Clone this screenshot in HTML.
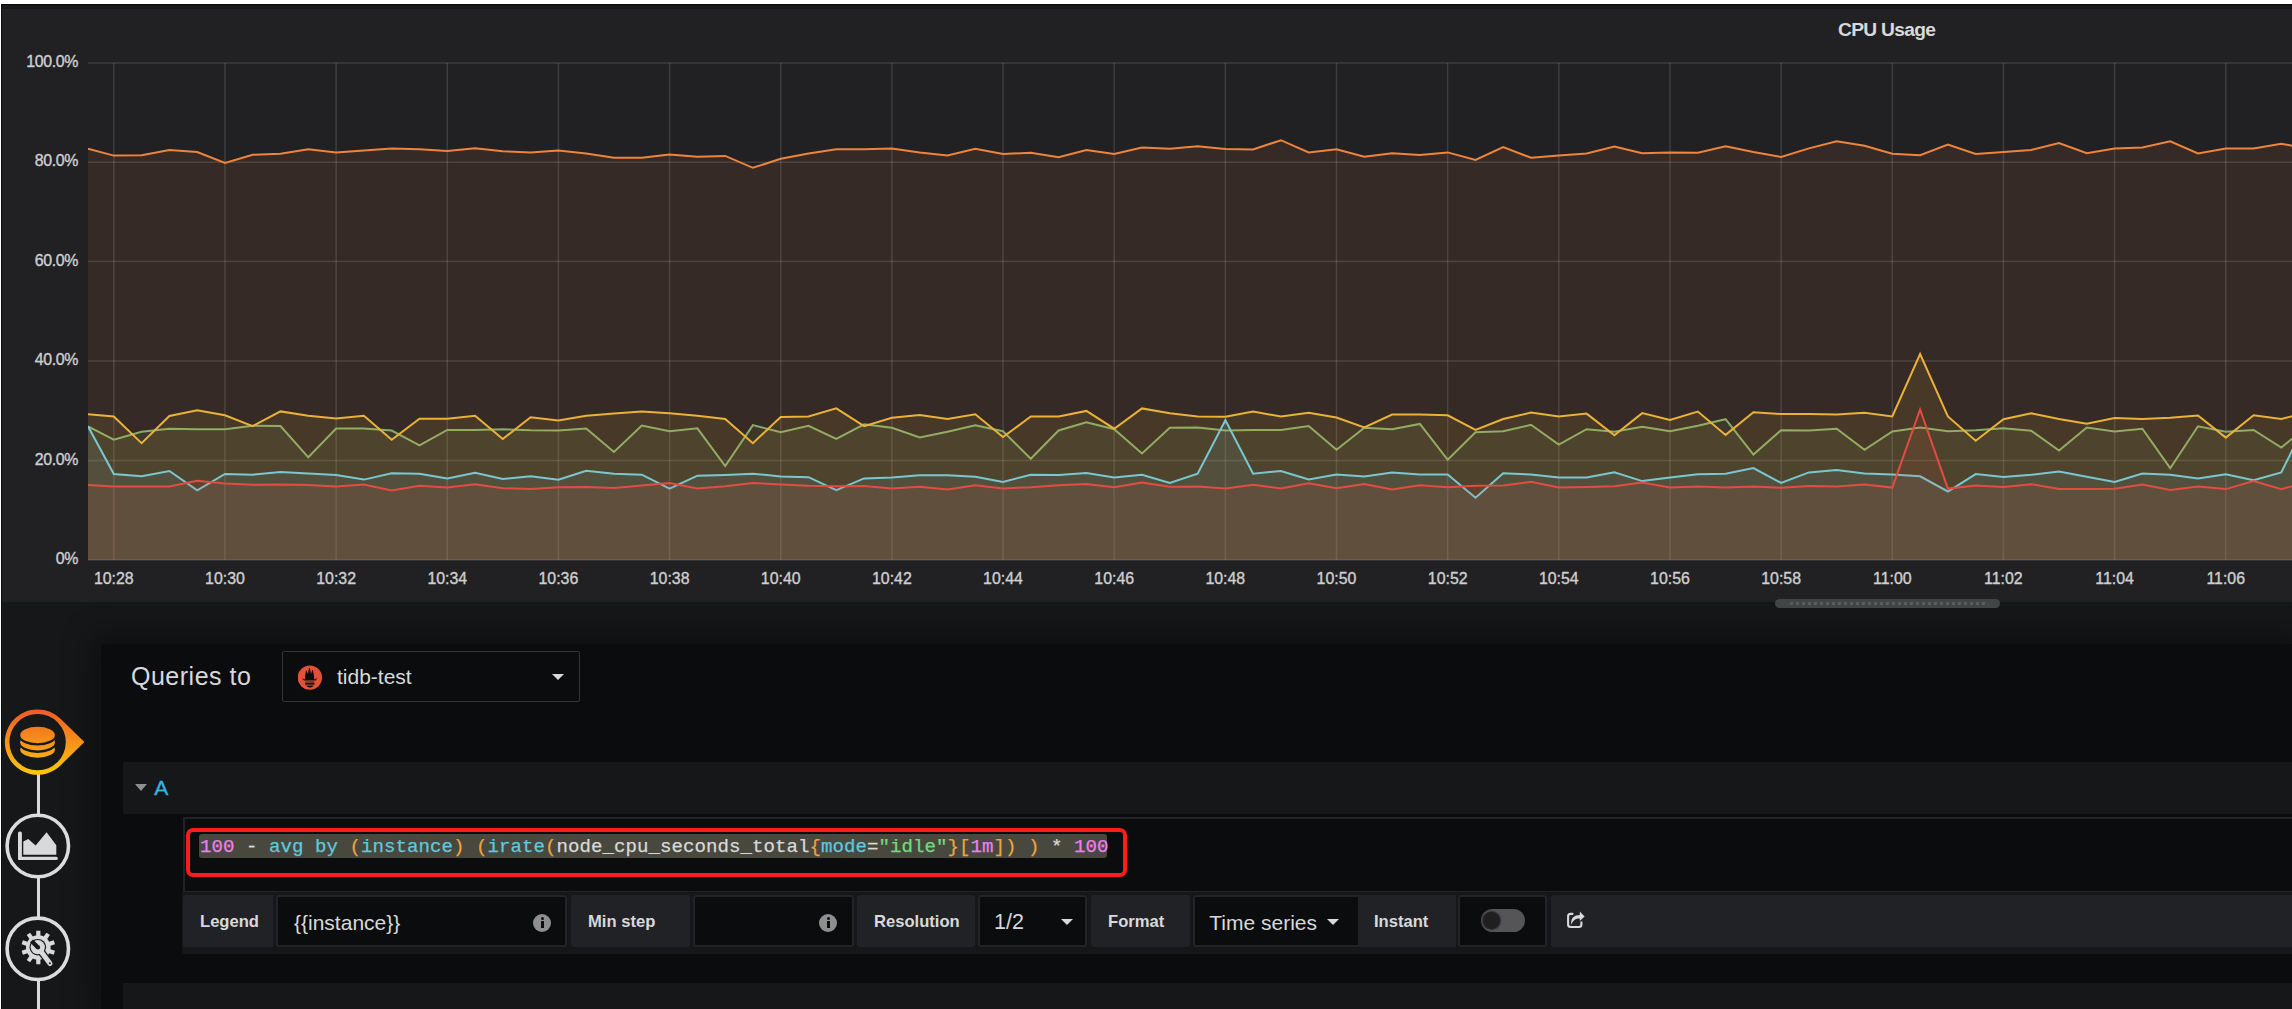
<!DOCTYPE html>
<html><head><meta charset="utf-8">
<style>
html,body{margin:0;padding:0}
body{width:2292px;height:1009px;position:relative;overflow:hidden;background:#ffffff;font-family:"Liberation Sans",sans-serif}
.abs{position:absolute}
.ax{font-family:"Liberation Sans",sans-serif;font-size:15.9px;fill:#cfcfcf;stroke:#cfcfcf;stroke-width:0.35px}
#panel{left:1px;top:4px;width:2291px;height:598px;background:#212124}
#panel .bt{position:absolute;left:0;top:0;width:100%;height:1px;background:#060708}
#panel .bl{position:absolute;left:0;top:0;width:1px;height:100%;background:#0b0c0e}
#panel .sh{position:absolute;left:1px;top:1px;right:0;height:4px;background:linear-gradient(#19191b,#161617)}
#title{left:1838px;top:19px;font-size:19.2px;font-weight:bold;color:#d8d9da;white-space:nowrap;letter-spacing:-0.68px}
#below{left:1px;top:602px;width:2291px;height:407px;background:#161719}
#below .bl{position:absolute;left:0;top:0;width:1px;height:100%;background:#0b0c0e}
#editor{left:101px;top:644px;width:2191px;height:365px;background:#0b0c0e;border-radius:3px 0 0 0;box-shadow:0 0 30px 10px rgba(0,0,0,0.35)}
#scroll{left:1775px;top:599px;width:225px;height:9px;border-radius:5px;background:#434446}
#scroll .dots{position:absolute;left:15px;top:3px;width:195px;height:3px;background:repeating-linear-gradient(90deg,#5a5b5d 0 3px,transparent 3px 6px)}
.qt{left:131px;top:662px;font-size:25px;color:#d8d9da;white-space:nowrap;letter-spacing:0.5px}
#ds{left:282px;top:651px;width:296px;height:49px;border:1px solid #333438;border-radius:2px;background:#0b0c0e}
#ds .name{position:absolute;left:54px;top:13px;font-size:21px;color:#d8d9da;white-space:nowrap}
#rowA{left:123px;top:762px;width:2169px;height:52px;background:#161719}
#rowA .tri{position:absolute;left:12px;top:22px;width:0;height:0;border-left:6.5px solid transparent;border-right:6.5px solid transparent;border-top:7px solid #8e8e8e}
#rowA .A{position:absolute;left:31.3px;top:13.7px;font-size:21px;color:#33b5e5;-webkit-text-stroke:0.35px #33b5e5}
#qfield{left:183px;top:817px;width:2109px;height:72px;border:2px solid #222326;border-right:0;background:#0b0c0e}
#redbox{left:186px;top:828.3px;width:933px;height:41px;border:4.5px solid #fb1c1c;border-radius:7px}
#sel{left:199px;top:834px;width:908px;height:24px;border-radius:3px;background:#48483f}
#code{left:200px;top:835px;font-family:"Liberation Mono",monospace;font-size:19.1px;letter-spacing:0.04px;-webkit-text-stroke:0.25px currentColor;line-height:24px;white-space:pre;color:#d8d9da}
.n{color:#ee7ff0}.f{color:#5fc9df}.p{color:#eda33e}.s{color:#6ede7c}
#opts{left:182px;top:892px;width:2110px;height:62px;background:#161719}
.lbl{position:absolute;top:3px;height:52px;background:#212226;color:#d8d9da;font-size:16.6px;font-weight:bold;line-height:53.5px;box-sizing:border-box;border-radius:3px}
.inp{position:absolute;top:3px;height:52px;background:#0b0c0e;border:2px solid #222326;box-sizing:border-box;color:#d8d9da;font-size:21px;line-height:51px;border-radius:3px}
.info{position:absolute;width:18px;height:18px;border-radius:50%;background:#8e8e8e}
.info:after{content:"";position:absolute;left:7.5px;top:7px;width:3px;height:7px;background:#0b0c0e}
.info:before{content:"";position:absolute;left:7.5px;top:3px;width:3px;height:3px;background:#0b0c0e;border-radius:50%}
.caret{position:absolute;width:0;height:0;border-left:6px solid transparent;border-right:6px solid transparent;border-top:6px solid #d8d9da}
</style></head>
<body>
<div id="panel" class="abs"><div class="bt"></div><div class="bl"></div><div class="sh"></div></div>
<div id="title" class="abs">CPU Usage</div>
<div id="below" class="abs"><div class="bl"></div></div>
<div id="editor" class="abs"></div>
<svg width="2292" height="1009" style="position:absolute;left:0;top:0">
<defs><clipPath id="cp"><rect x="88" y="0" width="2204" height="561"/></clipPath></defs>
<g stroke="rgba(200,200,200,0.17)" stroke-width="1.5"><line x1="88" y1="63" x2="2292" y2="63"/><line x1="88" y1="162.2" x2="2292" y2="162.2"/><line x1="88" y1="261.6" x2="2292" y2="261.6"/><line x1="88" y1="361" x2="2292" y2="361"/><line x1="88" y1="460.5" x2="2292" y2="460.5"/><line x1="88" y1="560" x2="2292" y2="560"/><line x1="113.80" y1="63" x2="113.80" y2="560"/><line x1="224.95" y1="63" x2="224.95" y2="560"/><line x1="336.11" y1="63" x2="336.11" y2="560"/><line x1="447.27" y1="63" x2="447.27" y2="560"/><line x1="558.42" y1="63" x2="558.42" y2="560"/><line x1="669.57" y1="63" x2="669.57" y2="560"/><line x1="780.73" y1="63" x2="780.73" y2="560"/><line x1="891.88" y1="63" x2="891.88" y2="560"/><line x1="1003.04" y1="63" x2="1003.04" y2="560"/><line x1="1114.19" y1="63" x2="1114.19" y2="560"/><line x1="1225.35" y1="63" x2="1225.35" y2="560"/><line x1="1336.50" y1="63" x2="1336.50" y2="560"/><line x1="1447.66" y1="63" x2="1447.66" y2="560"/><line x1="1558.82" y1="63" x2="1558.82" y2="560"/><line x1="1669.97" y1="63" x2="1669.97" y2="560"/><line x1="1781.12" y1="63" x2="1781.12" y2="560"/><line x1="1892.28" y1="63" x2="1892.28" y2="560"/><line x1="2003.43" y1="63" x2="2003.43" y2="560"/><line x1="2114.59" y1="63" x2="2114.59" y2="560"/><line x1="2225.75" y1="63" x2="2225.75" y2="560"/></g>
<g clip-path="url(#cp)">
<polygon points="88,560 88.0,426.3 113.8,439.7 141.6,431.7 169.4,428.7 197.2,429.2 225.0,429.2 252.7,425.8 280.5,426.1 308.3,457.3 336.1,428.5 363.9,428.5 391.7,430.5 419.5,445.4 447.3,430.0 475.1,430.0 502.8,429.2 530.6,430.2 558.4,430.5 586.2,428.5 614.0,452.0 641.8,425.6 669.6,431.2 697.4,428.3 725.2,466.1 752.9,425.1 780.7,432.2 808.5,425.8 836.3,438.8 864.1,424.3 891.9,427.8 919.7,437.5 947.5,431.7 975.3,425.3 1003.0,431.2 1030.8,458.8 1058.6,430.5 1086.4,422.4 1114.2,429.2 1142.0,453.4 1169.8,427.8 1197.6,427.5 1225.4,430.5 1253.1,430.0 1280.9,430.0 1308.7,426.1 1336.5,449.8 1364.3,427.8 1392.1,429.2 1419.9,423.9 1447.7,459.8 1475.5,432.2 1503.2,431.2 1531.0,424.8 1558.8,444.6 1586.6,429.2 1614.4,431.7 1642.2,426.8 1670.0,431.2 1697.8,425.8 1725.6,419.2 1753.4,454.5 1781.1,430.2 1808.9,430.5 1836.7,428.7 1864.5,449.8 1892.3,431.4 1920.1,427.5 1947.9,431.2 1975.7,430.2 2003.5,428.3 2031.2,430.7 2059.0,450.6 2086.8,427.5 2114.6,431.4 2142.4,428.7 2170.2,468.2 2198.0,426.3 2225.8,431.7 2253.6,430.0 2281.3,447.6 2309.1,424.6 2309.1,560" fill="#7EB26D" fill-opacity="0.1"/>
<polyline points="88.0,426.3 113.8,439.7 141.6,431.7 169.4,428.7 197.2,429.2 225.0,429.2 252.7,425.8 280.5,426.1 308.3,457.3 336.1,428.5 363.9,428.5 391.7,430.5 419.5,445.4 447.3,430.0 475.1,430.0 502.8,429.2 530.6,430.2 558.4,430.5 586.2,428.5 614.0,452.0 641.8,425.6 669.6,431.2 697.4,428.3 725.2,466.1 752.9,425.1 780.7,432.2 808.5,425.8 836.3,438.8 864.1,424.3 891.9,427.8 919.7,437.5 947.5,431.7 975.3,425.3 1003.0,431.2 1030.8,458.8 1058.6,430.5 1086.4,422.4 1114.2,429.2 1142.0,453.4 1169.8,427.8 1197.6,427.5 1225.4,430.5 1253.1,430.0 1280.9,430.0 1308.7,426.1 1336.5,449.8 1364.3,427.8 1392.1,429.2 1419.9,423.9 1447.7,459.8 1475.5,432.2 1503.2,431.2 1531.0,424.8 1558.8,444.6 1586.6,429.2 1614.4,431.7 1642.2,426.8 1670.0,431.2 1697.8,425.8 1725.6,419.2 1753.4,454.5 1781.1,430.2 1808.9,430.5 1836.7,428.7 1864.5,449.8 1892.3,431.4 1920.1,427.5 1947.9,431.2 1975.7,430.2 2003.5,428.3 2031.2,430.7 2059.0,450.6 2086.8,427.5 2114.6,431.4 2142.4,428.7 2170.2,468.2 2198.0,426.3 2225.8,431.7 2253.6,430.0 2281.3,447.6 2309.1,424.6" fill="none" stroke="#7EB26D" stroke-width="2" stroke-linejoin="miter"/>
<polygon points="88,560 88.0,414.3 113.8,416.5 141.6,443.2 169.4,416.0 197.2,410.2 225.0,415.3 252.7,426.1 280.5,411.4 308.3,415.8 336.1,418.5 363.9,415.8 391.7,439.7 419.5,418.7 447.3,418.7 475.1,415.8 502.8,439.0 530.6,417.2 558.4,420.4 586.2,415.8 614.0,413.6 641.8,411.4 669.6,413.3 697.4,415.8 725.2,419.0 752.9,443.2 780.7,417.0 808.5,416.5 836.3,408.4 864.1,426.1 891.9,417.7 919.7,415.0 947.5,419.0 975.3,414.3 1003.0,437.1 1030.8,416.5 1058.6,416.5 1086.4,410.9 1114.2,428.7 1142.0,408.4 1169.8,413.3 1197.6,416.5 1225.4,416.8 1253.1,411.6 1280.9,416.5 1308.7,412.8 1336.5,417.5 1364.3,427.5 1392.1,414.6 1419.9,414.6 1447.7,415.3 1475.5,430.0 1503.2,419.0 1531.0,412.6 1558.8,416.5 1586.6,413.6 1614.4,435.3 1642.2,413.1 1670.0,419.9 1697.8,411.6 1725.6,434.9 1753.4,412.3 1781.1,414.0 1808.9,414.0 1836.7,414.5 1864.5,412.8 1892.3,416.5 1920.1,354.0 1947.9,416.5 1975.7,440.8 2003.5,419.2 2031.2,413.3 2059.0,418.9 2086.8,423.8 2114.6,418.0 2142.4,418.9 2170.2,417.7 2198.0,415.5 2225.8,437.6 2253.6,415.3 2281.3,418.9 2309.1,411.8 2309.1,560" fill="#EAB839" fill-opacity="0.1"/>
<polyline points="88.0,414.3 113.8,416.5 141.6,443.2 169.4,416.0 197.2,410.2 225.0,415.3 252.7,426.1 280.5,411.4 308.3,415.8 336.1,418.5 363.9,415.8 391.7,439.7 419.5,418.7 447.3,418.7 475.1,415.8 502.8,439.0 530.6,417.2 558.4,420.4 586.2,415.8 614.0,413.6 641.8,411.4 669.6,413.3 697.4,415.8 725.2,419.0 752.9,443.2 780.7,417.0 808.5,416.5 836.3,408.4 864.1,426.1 891.9,417.7 919.7,415.0 947.5,419.0 975.3,414.3 1003.0,437.1 1030.8,416.5 1058.6,416.5 1086.4,410.9 1114.2,428.7 1142.0,408.4 1169.8,413.3 1197.6,416.5 1225.4,416.8 1253.1,411.6 1280.9,416.5 1308.7,412.8 1336.5,417.5 1364.3,427.5 1392.1,414.6 1419.9,414.6 1447.7,415.3 1475.5,430.0 1503.2,419.0 1531.0,412.6 1558.8,416.5 1586.6,413.6 1614.4,435.3 1642.2,413.1 1670.0,419.9 1697.8,411.6 1725.6,434.9 1753.4,412.3 1781.1,414.0 1808.9,414.0 1836.7,414.5 1864.5,412.8 1892.3,416.5 1920.1,354.0 1947.9,416.5 1975.7,440.8 2003.5,419.2 2031.2,413.3 2059.0,418.9 2086.8,423.8 2114.6,418.0 2142.4,418.9 2170.2,417.7 2198.0,415.5 2225.8,437.6 2253.6,415.3 2281.3,418.9 2309.1,411.8" fill="none" stroke="#EAB839" stroke-width="2" stroke-linejoin="miter"/>
<polygon points="88,560 88.0,426.3 113.8,474.0 141.6,476.2 169.4,471.0 197.2,490.4 225.0,474.0 252.7,474.7 280.5,472.0 308.3,473.5 336.1,475.0 363.9,479.6 391.7,473.2 419.5,473.7 447.3,478.4 475.1,472.8 502.8,478.9 530.6,476.2 558.4,479.8 586.2,470.8 614.0,473.7 641.8,474.7 669.6,488.6 697.4,475.7 725.2,475.0 752.9,473.7 780.7,476.4 808.5,477.2 836.3,490.1 864.1,478.4 891.9,477.4 919.7,475.2 947.5,475.2 975.3,476.7 1003.0,482.0 1030.8,474.7 1058.6,475.0 1086.4,473.0 1114.2,477.4 1142.0,474.7 1169.8,483.0 1197.6,473.7 1225.4,420.2 1253.1,473.7 1280.9,471.0 1308.7,479.4 1336.5,474.5 1364.3,476.4 1392.1,472.5 1419.9,474.5 1447.7,474.5 1475.5,497.7 1503.2,473.2 1531.0,474.5 1558.8,477.6 1586.6,477.4 1614.4,472.3 1642.2,481.1 1670.0,477.4 1697.8,474.2 1725.6,473.7 1753.4,468.0 1781.1,482.9 1808.9,472.4 1836.7,469.9 1864.5,473.6 1892.3,474.6 1920.1,476.3 1947.9,491.5 1975.7,474.1 2003.5,477.0 2031.2,474.8 2059.0,471.6 2086.8,476.8 2114.6,481.9 2142.4,473.6 2170.2,474.8 2198.0,478.5 2225.8,474.3 2253.6,480.2 2281.3,472.4 2309.1,416.2 2309.1,560" fill="#6ED0E0" fill-opacity="0.1"/>
<polyline points="88.0,426.3 113.8,474.0 141.6,476.2 169.4,471.0 197.2,490.4 225.0,474.0 252.7,474.7 280.5,472.0 308.3,473.5 336.1,475.0 363.9,479.6 391.7,473.2 419.5,473.7 447.3,478.4 475.1,472.8 502.8,478.9 530.6,476.2 558.4,479.8 586.2,470.8 614.0,473.7 641.8,474.7 669.6,488.6 697.4,475.7 725.2,475.0 752.9,473.7 780.7,476.4 808.5,477.2 836.3,490.1 864.1,478.4 891.9,477.4 919.7,475.2 947.5,475.2 975.3,476.7 1003.0,482.0 1030.8,474.7 1058.6,475.0 1086.4,473.0 1114.2,477.4 1142.0,474.7 1169.8,483.0 1197.6,473.7 1225.4,420.2 1253.1,473.7 1280.9,471.0 1308.7,479.4 1336.5,474.5 1364.3,476.4 1392.1,472.5 1419.9,474.5 1447.7,474.5 1475.5,497.7 1503.2,473.2 1531.0,474.5 1558.8,477.6 1586.6,477.4 1614.4,472.3 1642.2,481.1 1670.0,477.4 1697.8,474.2 1725.6,473.7 1753.4,468.0 1781.1,482.9 1808.9,472.4 1836.7,469.9 1864.5,473.6 1892.3,474.6 1920.1,476.3 1947.9,491.5 1975.7,474.1 2003.5,477.0 2031.2,474.8 2059.0,471.6 2086.8,476.8 2114.6,481.9 2142.4,473.6 2170.2,474.8 2198.0,478.5 2225.8,474.3 2253.6,480.2 2281.3,472.4 2309.1,416.2" fill="none" stroke="#6ED0E0" stroke-width="2" stroke-linejoin="miter"/>
<polygon points="88,560 88.0,148.8 113.8,155.6 141.6,155.2 169.4,150.0 197.2,152.0 225.0,163.0 252.7,154.7 280.5,153.7 308.3,149.3 336.1,152.5 363.9,150.5 391.7,148.5 419.5,149.3 447.3,151.0 475.1,148.3 502.8,151.2 530.6,152.5 558.4,150.5 586.2,153.4 614.0,157.8 641.8,157.8 669.6,154.4 697.4,156.8 725.2,155.9 752.9,167.8 780.7,158.8 808.5,153.4 836.3,149.3 864.1,149.3 891.9,148.5 919.7,152.4 947.5,155.4 975.3,148.8 1003.0,154.1 1030.8,152.7 1058.6,157.3 1086.4,150.0 1114.2,153.9 1142.0,147.6 1169.8,148.8 1197.6,146.3 1225.4,149.0 1253.1,149.5 1280.9,140.2 1308.7,152.4 1336.5,149.3 1364.3,156.8 1392.1,153.2 1419.9,155.1 1447.7,152.4 1475.5,160.0 1503.2,147.0 1531.0,157.8 1558.8,155.4 1586.6,153.4 1614.4,146.6 1642.2,153.2 1670.0,152.4 1697.8,152.7 1725.6,146.3 1753.4,152.0 1781.1,157.0 1808.9,148.4 1836.7,141.3 1864.5,145.7 1892.3,153.8 1920.1,155.2 1947.9,144.5 1975.7,154.0 2003.5,152.0 2031.2,149.9 2059.0,143.0 2086.8,153.3 2114.6,148.4 2142.4,147.4 2170.2,141.3 2198.0,153.5 2225.8,148.4 2253.6,148.4 2281.3,143.7 2309.1,149.0 2309.1,560" fill="#EF843C" fill-opacity="0.1"/>
<polyline points="88.0,148.8 113.8,155.6 141.6,155.2 169.4,150.0 197.2,152.0 225.0,163.0 252.7,154.7 280.5,153.7 308.3,149.3 336.1,152.5 363.9,150.5 391.7,148.5 419.5,149.3 447.3,151.0 475.1,148.3 502.8,151.2 530.6,152.5 558.4,150.5 586.2,153.4 614.0,157.8 641.8,157.8 669.6,154.4 697.4,156.8 725.2,155.9 752.9,167.8 780.7,158.8 808.5,153.4 836.3,149.3 864.1,149.3 891.9,148.5 919.7,152.4 947.5,155.4 975.3,148.8 1003.0,154.1 1030.8,152.7 1058.6,157.3 1086.4,150.0 1114.2,153.9 1142.0,147.6 1169.8,148.8 1197.6,146.3 1225.4,149.0 1253.1,149.5 1280.9,140.2 1308.7,152.4 1336.5,149.3 1364.3,156.8 1392.1,153.2 1419.9,155.1 1447.7,152.4 1475.5,160.0 1503.2,147.0 1531.0,157.8 1558.8,155.4 1586.6,153.4 1614.4,146.6 1642.2,153.2 1670.0,152.4 1697.8,152.7 1725.6,146.3 1753.4,152.0 1781.1,157.0 1808.9,148.4 1836.7,141.3 1864.5,145.7 1892.3,153.8 1920.1,155.2 1947.9,144.5 1975.7,154.0 2003.5,152.0 2031.2,149.9 2059.0,143.0 2086.8,153.3 2114.6,148.4 2142.4,147.4 2170.2,141.3 2198.0,153.5 2225.8,148.4 2253.6,148.4 2281.3,143.7 2309.1,149.0" fill="none" stroke="#EF843C" stroke-width="2" stroke-linejoin="miter"/>
<polygon points="88,560 88.0,485.0 113.8,486.4 141.6,486.4 169.4,486.4 197.2,480.8 225.0,483.5 252.7,484.7 280.5,484.5 308.3,485.0 336.1,486.4 363.9,484.5 391.7,490.4 419.5,485.7 447.3,487.4 475.1,484.2 502.8,488.2 530.6,488.9 558.4,487.2 586.2,486.9 614.0,487.9 641.8,485.5 669.6,483.0 697.4,488.4 725.2,486.2 752.9,483.0 780.7,484.5 808.5,485.7 836.3,486.2 864.1,486.0 891.9,488.6 919.7,486.7 947.5,489.4 975.3,485.2 1003.0,488.4 1030.8,487.2 1058.6,485.2 1086.4,484.0 1114.2,487.2 1142.0,482.5 1169.8,486.7 1197.6,486.4 1225.4,488.6 1253.1,484.7 1280.9,488.4 1308.7,483.3 1336.5,488.2 1364.3,484.0 1392.1,489.4 1419.9,485.2 1447.7,487.2 1475.5,485.7 1503.2,485.5 1531.0,481.8 1558.8,487.4 1586.6,486.9 1614.4,486.2 1642.2,482.5 1670.0,487.4 1697.8,486.4 1725.6,487.4 1753.4,486.6 1781.1,487.8 1808.9,486.1 1836.7,486.6 1864.5,484.6 1892.3,487.6 1920.1,409.4 1947.9,488.6 1975.7,485.6 2003.5,487.1 2031.2,484.2 2059.0,489.1 2086.8,489.1 2114.6,488.8 2142.4,484.4 2170.2,490.0 2198.0,486.4 2225.8,489.1 2253.6,481.0 2281.3,489.1 2309.1,481.5 2309.1,560" fill="#E24D42" fill-opacity="0.1"/>
<polyline points="88.0,485.0 113.8,486.4 141.6,486.4 169.4,486.4 197.2,480.8 225.0,483.5 252.7,484.7 280.5,484.5 308.3,485.0 336.1,486.4 363.9,484.5 391.7,490.4 419.5,485.7 447.3,487.4 475.1,484.2 502.8,488.2 530.6,488.9 558.4,487.2 586.2,486.9 614.0,487.9 641.8,485.5 669.6,483.0 697.4,488.4 725.2,486.2 752.9,483.0 780.7,484.5 808.5,485.7 836.3,486.2 864.1,486.0 891.9,488.6 919.7,486.7 947.5,489.4 975.3,485.2 1003.0,488.4 1030.8,487.2 1058.6,485.2 1086.4,484.0 1114.2,487.2 1142.0,482.5 1169.8,486.7 1197.6,486.4 1225.4,488.6 1253.1,484.7 1280.9,488.4 1308.7,483.3 1336.5,488.2 1364.3,484.0 1392.1,489.4 1419.9,485.2 1447.7,487.2 1475.5,485.7 1503.2,485.5 1531.0,481.8 1558.8,487.4 1586.6,486.9 1614.4,486.2 1642.2,482.5 1670.0,487.4 1697.8,486.4 1725.6,487.4 1753.4,486.6 1781.1,487.8 1808.9,486.1 1836.7,486.6 1864.5,484.6 1892.3,487.6 1920.1,409.4 1947.9,488.6 1975.7,485.6 2003.5,487.1 2031.2,484.2 2059.0,489.1 2086.8,489.1 2114.6,488.8 2142.4,484.4 2170.2,490.0 2198.0,486.4 2225.8,489.1 2253.6,481.0 2281.3,489.1 2309.1,481.5" fill="none" stroke="#E24D42" stroke-width="2" stroke-linejoin="miter"/>
</g>
<text x="78" y="67.1" text-anchor="end" class="ax" letter-spacing="-0.35">100.0%</text>
<text x="78" y="166.3" text-anchor="end" class="ax" letter-spacing="-0.35">80.0%</text>
<text x="78" y="265.7" text-anchor="end" class="ax" letter-spacing="-0.35">60.0%</text>
<text x="78" y="365.1" text-anchor="end" class="ax" letter-spacing="-0.35">40.0%</text>
<text x="78" y="464.6" text-anchor="end" class="ax" letter-spacing="-0.35">20.0%</text>
<text x="78" y="564.1" text-anchor="end" class="ax" letter-spacing="-0.35">0%</text>
<text x="113.8" y="583.8" text-anchor="middle" class="ax">10:28</text>
<text x="225.0" y="583.8" text-anchor="middle" class="ax">10:30</text>
<text x="336.1" y="583.8" text-anchor="middle" class="ax">10:32</text>
<text x="447.3" y="583.8" text-anchor="middle" class="ax">10:34</text>
<text x="558.4" y="583.8" text-anchor="middle" class="ax">10:36</text>
<text x="669.6" y="583.8" text-anchor="middle" class="ax">10:38</text>
<text x="780.7" y="583.8" text-anchor="middle" class="ax">10:40</text>
<text x="891.9" y="583.8" text-anchor="middle" class="ax">10:42</text>
<text x="1003.0" y="583.8" text-anchor="middle" class="ax">10:44</text>
<text x="1114.2" y="583.8" text-anchor="middle" class="ax">10:46</text>
<text x="1225.3" y="583.8" text-anchor="middle" class="ax">10:48</text>
<text x="1336.5" y="583.8" text-anchor="middle" class="ax">10:50</text>
<text x="1447.7" y="583.8" text-anchor="middle" class="ax">10:52</text>
<text x="1558.8" y="583.8" text-anchor="middle" class="ax">10:54</text>
<text x="1670.0" y="583.8" text-anchor="middle" class="ax">10:56</text>
<text x="1781.1" y="583.8" text-anchor="middle" class="ax">10:58</text>
<text x="1892.3" y="583.8" text-anchor="middle" class="ax">11:00</text>
<text x="2003.4" y="583.8" text-anchor="middle" class="ax">11:02</text>
<text x="2114.6" y="583.8" text-anchor="middle" class="ax">11:04</text>
<text x="2225.7" y="583.8" text-anchor="middle" class="ax">11:06</text>
</svg>
<div id="scroll" class="abs"><div class="dots"></div></div>

<!-- sidebar -->
<svg class="abs" style="left:0;top:640px" width="100" height="369">
<defs><linearGradient id="og" gradientUnits="userSpaceOnUse" x1="0" y1="69" x2="0" y2="135"><stop offset="0" stop-color="#f05a28"/><stop offset="1" stop-color="#fbca0a"/></linearGradient></defs>
<line x1="38.5" y1="134" x2="38.5" y2="369" stroke="#d8d9da" stroke-width="3"/>
<path d="M37.6,69.4 A32.7,32.7 0 0 1 60.5,78.8 L84.4,102.1 L60.5,125.4 A32.7,32.7 0 1 1 37.6,69.4 Z" fill="url(#og)"/>
<circle cx="37.6" cy="102.1" r="28.2" fill="#17181a"/>
<ellipse cx="37.55" cy="109.5" rx="17.35" ry="8.2" fill="url(#og)"/>
<ellipse cx="37.55" cy="104.7" rx="17.6" ry="8.2" fill="#17181a"/>
<ellipse cx="37.55" cy="102.2" rx="17.35" ry="8.2" fill="url(#og)"/>
<ellipse cx="37.55" cy="97.4" rx="17.6" ry="8.2" fill="#17181a"/>
<ellipse cx="37.55" cy="95" rx="17.35" ry="8.2" fill="url(#og)"/>
<circle cx="37.8" cy="206" r="30.7" fill="#17181a" stroke="#dcdcdd" stroke-width="3.6"/>
<g fill="#d8d9da">
<rect x="18" y="191.5" width="3.9" height="28.6" rx="1.5"/>
<rect x="18" y="216.7" width="39.8" height="3.4" rx="1.5"/>
<path d="M23.3,214.8 L23.3,201.5 L28.3,198.9 L35.6,205.5 L46.6,192.2 L56.3,205.3 L56.3,214.8 Z"/>
</g>
<circle cx="37.8" cy="308.8" r="30.7" fill="#17181a" stroke="#dcdcdd" stroke-width="3.6"/>
<g transform="translate(38.3,307.5)">
<path d="M-2.14,-12.11 L-2.07,-16.87 L2.07,-16.87 L2.14,-12.11 L3.80,-11.70 L5.39,-11.06 L8.24,-14.87 L11.59,-12.43 L8.85,-8.54 L9.95,-7.23 L10.86,-5.77 L15.41,-7.18 L16.69,-3.24 L12.18,-1.71 L12.30,-0.00 L12.18,1.71 L16.69,3.24 L15.41,7.18 L10.86,5.77 L9.95,7.23 L8.85,8.54 L11.59,12.43 L8.24,14.87 L5.39,11.06 L3.80,11.70 L2.14,12.11 L2.07,16.87 L-2.07,16.87 L-2.14,12.11 L-3.80,11.70 L-5.39,11.06 L-8.24,14.87 L-11.59,12.43 L-8.85,8.54 L-9.95,7.23 L-10.86,5.77 L-15.41,7.18 L-16.69,3.24 L-12.18,1.71 L-12.30,0.00 L-12.18,-1.71 L-16.69,-3.24 L-15.41,-7.18 L-10.86,-5.77 L-9.95,-7.23 L-8.85,-8.54 L-11.59,-12.43 L-8.24,-14.87 L-5.39,-11.06 L-3.80,-11.70 Z" fill="#d8d9da"/>
<g stroke="#17181a" stroke-width="7.5" stroke-linecap="round"><line x1="-0.5" y1="-0.3" x2="11.7" y2="16"/></g>
<circle cx="-0.5" cy="-0.3" r="8.3" fill="#17181a"/>
<circle cx="-0.5" cy="-0.3" r="7.1" fill="#d8d9da"/>
<g stroke="#d8d9da" stroke-width="5" stroke-linecap="round"><line x1="-0.5" y1="-0.3" x2="11.7" y2="16"/></g>
<line x1="-0.3" y1="-0.1" x2="-6.8" y2="-6.6" stroke="#17181a" stroke-width="4.2"/><circle cx="-0.3" cy="-0.1" r="2.1" fill="#17181a"/>
<circle cx="11.6" cy="15.8" r="1" fill="#17181a"/>
</g>
</svg>

<div class="abs qt">Queries to</div>
<div id="ds" class="abs">
<svg class="abs" style="left:15px;top:13px" width="25" height="25" viewBox="0 0 25 25"><circle cx="11.85" cy="12.6" r="12.2" fill="#e25236"/><path d="M3.9,13.2 L7.2,14.6 C7,11 7.5,7 8.4,4.9 C9,7 9.5,8 10,9 C10.3,6 10.8,4 11.4,2.4 C12,4 12.7,6 13,9 C13.4,8 13.9,6.5 14.4,4.6 C15.5,7 16.3,11 16.2,14.6 L19.5,13.2 L17.5,15.6 L6,15.6 Z" fill="#0b0c0e"/><rect x="7.3" y="15.8" width="9" height="4.8" fill="#8c3522"/><rect x="7.3" y="18.1" width="9" height="1.2" fill="#0b0c0e"/><path d="M9,20.8 L15,20.8 A3,1.6 0 0 1 9,20.8 Z" fill="#0b0c0e"/></svg>
<div class="name">tidb-test</div>
<div class="caret" style="left:269px;top:22px"></div>
</div>

<div id="rowA" class="abs"><div class="tri"></div><div class="A">A</div></div>

<div id="qfield" class="abs"></div>
<div id="sel" class="abs"></div>
<div id="code" class="abs"><span class="n">100</span> - <span class="f">avg</span> <span class="f">by</span> <span class="p">(</span><span class="f">instance</span><span class="p">)</span> <span class="p">(</span><span class="f">irate</span><span class="p">(</span>node_cpu_seconds_total<span class="p">{</span><span class="f">mode</span>=<span class="s">"idle"</span><span class="p">}[</span><span class="n">1m</span><span class="p">])</span> <span class="p">)</span> * <span class="n">100</span></div>
<div id="redbox" class="abs"></div>

<div id="opts" class="abs">
<div class="lbl" style="left:1px;width:90px;padding-left:17px;border-radius:3px 0 0 3px">Legend</div>
<div class="inp" style="left:94px;width:291px;padding-left:16px">{{instance}}<div class="info" style="left:255px;top:17px"></div></div>
<div class="lbl" style="left:389px;width:119px;padding-left:17px">Min step</div>
<div class="inp" style="left:511px;width:161px"><div class="info" style="left:124px;top:17px"></div></div>
<div class="lbl" style="left:675px;width:118px;padding-left:17px">Resolution</div>
<div class="inp" style="left:796px;width:109px;padding-left:14px;font-size:21.5px">1/2<div class="caret" style="left:81px;top:22px"></div></div>
<div class="lbl" style="left:909px;width:99px;padding-left:17px">Format</div>
<div class="inp" style="left:1011px;width:165px;padding-left:14.3px;border-right:0;border-radius:3px 0 0 3px">Time series<div class="caret" style="left:132px;top:22px"></div></div>
<div class="lbl" style="left:1176px;width:98px;padding-left:16px;border-radius:0">Instant</div>
<div class="inp" style="left:1276px;width:89px"><div style="position:absolute;left:21px;top:11.7px;width:43.5px;height:23.8px;border-radius:12px;background:#555557"></div><div style="position:absolute;left:22.6px;top:14.7px;width:17.7px;height:17.7px;border-radius:50%;background:#1f1f20;box-shadow:0 0 1.5px 1px rgba(40,40,42,0.9)"></div></div>
<div class="lbl" style="left:1369px;width:741px;border-radius:3px 0 0 3px">
<svg style="position:absolute;left:0;top:0" width="40" height="52"><path d="M22.3,18.9 L19.6,18.9 Q17.1,18.9 17.1,21.4 L17.1,29.5 Q17.1,32 19.6,32 L27.9,32 Q30.4,32 30.4,29.5 L30.4,26.6" fill="none" stroke="#d8d9da" stroke-width="2.1"/><path d="M20.3,30 C19.5,24 22,20.2 28.8,20 L28.8,16.5 L33.6,21.5 L28.8,26 L28.8,23.6 C24.5,23.6 21.8,25.5 20.3,30 Z" fill="#d8d9da"/></svg>
</div>
</div>

<div class="abs" style="left:123px;top:983px;width:2169px;height:26px;background:#161719"></div>
</body></html>
